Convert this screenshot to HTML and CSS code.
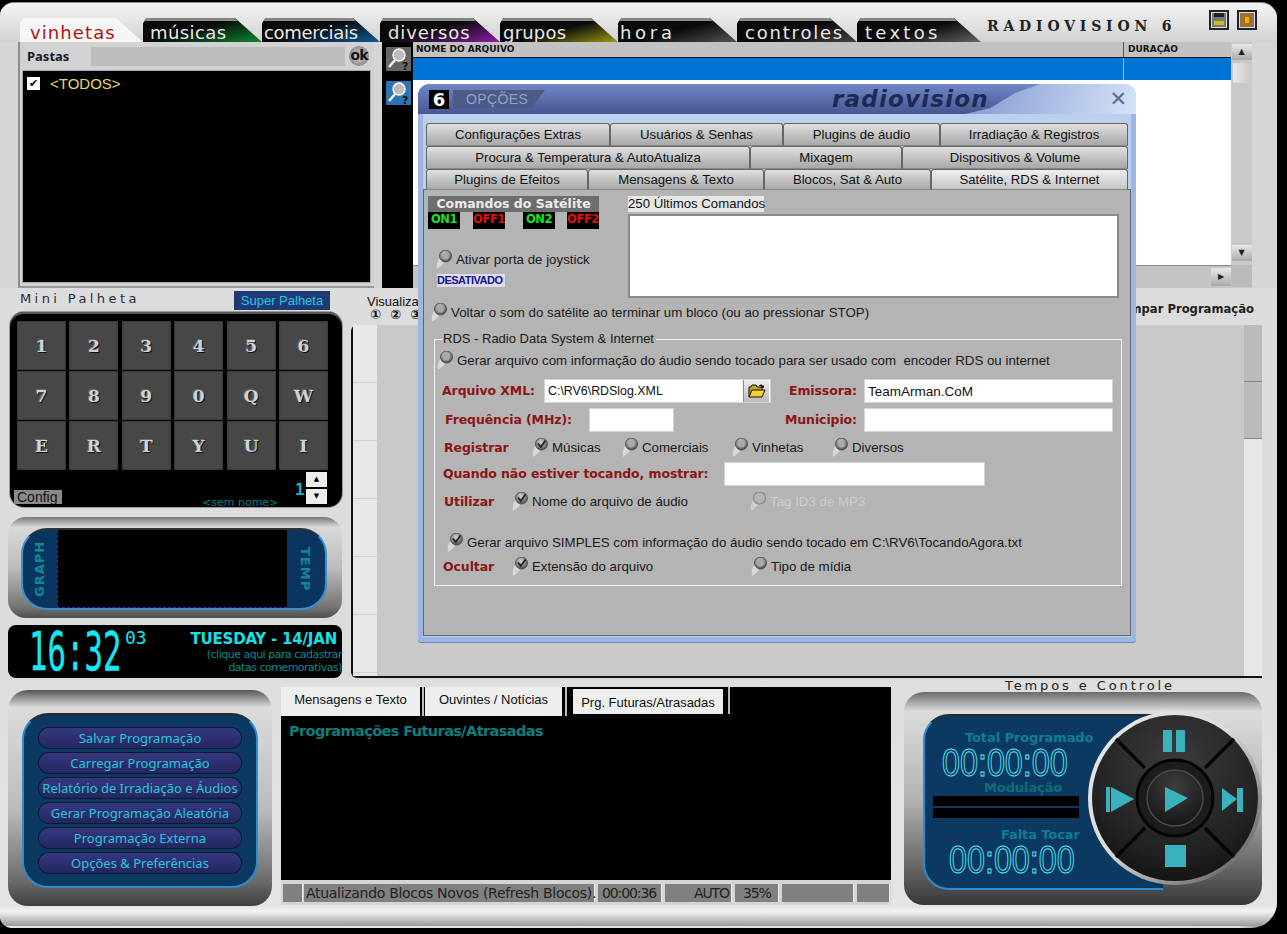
FILE: index.html
```html
<!DOCTYPE html>
<html lang="pt">
<head>
<meta charset="utf-8">
<title>RadioVision 6</title>
<link rel="stylesheet" href="styles.css">
</head>
<body>
<svg class="defs" width="0" height="0" aria-hidden="true">
  <defs>
    <radialGradient id="ball" cx="45%" cy="35%" r="70%">
      <stop offset="0" stop-color="#d4d4d4"/><stop offset=".55" stop-color="#8b8b8b"/><stop offset="1" stop-color="#3d3d3d"/>
    </radialGradient>
    <symbol id="radio" viewBox="0 0 18 20">
      <path d="M1 19 C0 13 2 10 4 7 L8 13 C6 15 4 17 1 19Z" fill="#d8d8d8"/>
      <circle cx="9.5" cy="6" r="6" fill="url(#ball)" stroke="#444" stroke-width=".8"/>
      <circle cx="9.5" cy="6" r="3.4" fill="#a9a9a9"/>
    </symbol>
    <symbol id="radio-on" viewBox="0 0 18 20">
      <path d="M1 19 C0 13 2 10 4 7 L8 13 C6 15 4 17 1 19Z" fill="#d8d8d8"/>
      <circle cx="9.5" cy="6" r="6" fill="url(#ball)" stroke="#444" stroke-width=".8"/>
      <path d="M6 5.5 L8.8 9 L13.5 2.5" fill="none" stroke="#222" stroke-width="1.8"/>
    </symbol>
    <symbol id="radio-off" viewBox="0 0 18 20">
      <path d="M1 19 C0 13 2 10 4 7 L8 13 C6 15 4 17 1 19Z" fill="#cfcfcf"/>
      <circle cx="9.5" cy="6" r="6" fill="#b4b4b4" stroke="#8a8a8a" stroke-width="1.2"/>
    </symbol>
    <symbol id="lens" viewBox="0 0 25 24">
      <circle cx="13" cy="8" r="6" fill="#bdbdbd" stroke="#fff" stroke-width="1.4"/>
      <path d="M9 13 L3 20" stroke="#eee" stroke-width="2.6"/>
      <text x="16" y="23" font-family="DejaVu Sans" font-size="11" font-weight="700" fill="#111">?</text>
    </symbol>
  </defs>
</svg>

<div class="app">
  <header class="topbar">
    <nav class="tabs">
      <span class="tab t-vinhetas">vinhetas</span>
      <span class="tab t-musicas">músicas</span>
      <span class="tab t-comerciais">comerciais</span>
      <span class="tab t-diversos">diversos</span>
      <span class="tab t-grupos">grupos</span>
      <span class="tab t-hora">hora</span>
      <span class="tab t-controles">controles</span>
      <span class="tab t-textos">textos</span>
    </nav>
    <div class="brand">RADIOVISION 6</div>
    <div class="winbtns">
      <span class="winbtn"><i class="min-mark"></i></span>
      <span class="winbtn"><i class="close-mark"></i></span>
    </div>
  </header>

  <section class="browser">
    <div class="folders">
      <div class="folders-head">
        <strong class="folders-title">Pastas</strong>
        <span class="folders-input"></span>
        <span class="ok">ok</span>
      </div>
      <div class="folders-list">
        <div class="folder-item"><span class="check">✔</span><span class="folder-name">&lt;TODOS&gt;</span></div>
      </div>
    </div>
    <div class="searchcol">
      <span class="searchbtn"><svg width="25" height="24"><use href="#lens"/></svg></span>
      <span class="searchbtn searchbtn-blue"><svg width="25" height="24"><use href="#lens"/></svg></span>
    </div>
    <div class="filelist">
      <div class="filelist-main">
        <div class="list-head"><span class="col-name">NOME DO ARQUIVO</span><span class="col-dur">DURAÇÃO</span></div>
        <div class="list-row"><span class="cell-name"></span><span class="cell-dur"></span></div>
        <div class="list-body"></div>
        <div class="hscroll"><span class="sbtn sbtn-right">▶</span></div>
      </div>
      <div class="vscroll">
        <span class="sbtn sbtn-up">▲</span>
        <span class="sthumb"></span>
        <span class="sbtn sbtn-down">▼</span>
        <span class="scorner"></span>
      </div>
    </div>
  </section>

  <section class="middle">
    <aside class="leftcol">
      <div class="palette-head">
        <span class="mini-title">Mini Palheta</span>
        <span class="super-btn">Super Palheta</span>
      </div>
      <div class="keypad">
        <div class="keys">
          <span class="key">1</span><span class="key">2</span><span class="key">3</span><span class="key">4</span><span class="key">5</span><span class="key">6</span>
          <span class="key">7</span><span class="key">8</span><span class="key">9</span><span class="key">0</span><span class="key">Q</span><span class="key">W</span>
          <span class="key">E</span><span class="key">R</span><span class="key">T</span><span class="key">Y</span><span class="key">U</span><span class="key">I</span>
        </div>
        <div class="keypad-foot">
          <span class="config">Config</span>
          <span class="noname">&lt;sem nome&gt;</span>
          <span class="pageno">1</span>
          <span class="spin"><span class="spinbtn">▲</span><span class="spinbtn">▼</span></span>
        </div>
      </div>
      <div class="graph">
        <div class="graph-in">
          <span class="vlabel vlabel-l">GRAPH</span>
          <div class="graph-plot"></div>
          <span class="vlabel vlabel-r">TEMP</span>
        </div>
      </div>
      <div class="clock">
        <div class="clock-time"><span class="clock-hm">16:32</span><span class="clock-s">03</span></div>
        <div class="clock-date">
          <strong class="date-main">TUESDAY - 14/JAN</strong>
          <span class="date-sub">(clique aqui para cadastrar</span>
          <span class="date-sub">datas comemorativas)</span>
        </div>
      </div>
    </aside>
    <div class="schedule">
      <div class="sch-head">
        <div class="view">
          <span class="view-label">Visualizar</span>
          <span class="view-nums"><i>①</i><i>②</i><i>③</i></span>
        </div>
        <strong class="clear">Limpar Programação</strong>
      </div>
      <div class="sch-body">
        <div class="sch-hours"><span></span><span></span><span></span><span></span><span></span><span></span></div>
        <div class="sch-main"></div>
        <div class="sch-scroll"><span></span><span></span></div>
      </div>
    </div>
  </section>

  <section class="bottom">
    <div class="actions">
      <div class="actions-in">
        <span class="action">Salvar Programação</span>
        <span class="action">Carregar Programação</span>
        <span class="action">Relatório de Irradiação e Áudios</span>
        <span class="action">Gerar Programação Aleatória</span>
        <span class="action">Programação Externa</span>
        <span class="action">Opções &amp; Preferências</span>
      </div>
    </div>
    <div class="messages">
      <div class="msg-tabs">
        <span class="msg-tab msg-tab-1">Mensagens e Texto</span>
        <span class="msg-sep"></span>
        <span class="msg-tab msg-tab-2">Ouvintes / Notícias</span>
        <span class="msg-sep msg-sep-2"></span>
        <span class="msg-tab msg-tab-3">Prg. Futuras/Atrasadas</span>
        <span class="msg-sep msg-sep-3"></span>
      </div>
      <div class="msg-body"><strong class="msg-title">Programações Futuras/Atrasadas</strong></div>
      <div class="status">
        <span class="st st-0"></span>
        <span class="st st-1">Atualizando Blocos Novos (Refresh Blocos).</span>
        <span class="st st-2">00:00:36</span>
        <span class="st st-3">AUTO</span>
        <span class="st st-4">35%</span>
        <span class="st st-5"></span>
        <span class="st st-6"></span>
      </div>
    </div>
    <div class="player">
      <div class="player-label">Tempos e Controle</div>
      <div class="player-frame">
        <div class="player-in">
          <strong class="pl-title pl-total">Total Programado</strong>
          <div class="lcd lcd-total">00:00:00</div>
          <strong class="pl-title pl-mod">Modulação</strong>
          <div class="vu"><span></span><span></span></div>
          <strong class="pl-title pl-falta">Falta Tocar</strong>
          <div class="lcd lcd-falta">00:00:00</div>
        </div>
        <svg class="disc" width="180" height="180" viewBox="-90 -90 180 180">
          <defs>
            <linearGradient id="ring" x1="0" y1="0" x2="1" y2="1"><stop offset="0" stop-color="#e8e8e8"/><stop offset=".45" stop-color="#dcdcdc"/><stop offset="1" stop-color="#4a4a4a"/></linearGradient>
            <radialGradient id="face" cx="50%" cy="30%" r="75%"><stop offset="0" stop-color="#3c3c3c"/><stop offset=".7" stop-color="#222"/><stop offset="1" stop-color="#111"/></radialGradient>
            <radialGradient id="hub" cx="50%" cy="30%" r="70%"><stop offset="0" stop-color="#3f3f3f"/><stop offset="1" stop-color="#161616"/></radialGradient>
          </defs>
          <circle r="87" fill="url(#ring)"/>
          <circle r="83" fill="url(#face)"/>
          <g stroke="#050505" stroke-width="3.5">
            <path d="M-30 -30 L-59 -59 M30 -30 L59 -59 M-30 30 L-59 59 M30 30 L59 59"/>
          </g>
          <circle r="38" fill="#1c1c1c" stroke="#050505" stroke-width="3"/>
          <circle r="28" fill="url(#hub)" stroke="#4a4a4a" stroke-width="1.5"/>
          <g fill="#3ab2bd">
            <rect x="-12" y="-68" width="9" height="22"/><rect x="1" y="-68" width="9" height="22"/>
            <path d="M-10 -11 L13 0 L-10 14Z"/>
            <rect x="-10" y="47" width="21" height="22"/>
            <rect x="-69" y="-11" width="4" height="25"/><path d="M-64 -11 L-41 1 L-64 14Z"/>
            <path d="M47 -10 L62 1 L47 13Z"/><rect x="62" y="-10" width="6" height="24"/>
          </g>
        </svg>
      </div>
    </div>
  </section>

  <div class="dialog">
    <div class="dlg-head">
      <div class="dlg-bar">
        <span class="six">6</span>
        <span class="dlg-title">OPÇÕES</span>
        <em class="dlg-logo">radiovision</em>
      </div>
      <span class="dlg-x">✕</span>
    </div>
    <div class="dlg-tabs">
      <div class="tabrow tabrow-1">
        <span class="dtab">Configurações Extras</span><span class="dtab">Usuários &amp; Senhas</span><span class="dtab">Plugins de áudio</span><span class="dtab">Irradiação &amp; Registros</span>
      </div>
      <div class="tabrow tabrow-2">
        <span class="dtab">Procura &amp; Temperatura &amp; AutoAtualiza</span><span class="dtab">Mixagem</span><span class="dtab">Dispositivos &amp; Volume</span>
      </div>
      <div class="tabrow tabrow-3">
        <span class="dtab">Plugins de Efeitos</span><span class="dtab">Mensagens &amp; Texto</span><span class="dtab">Blocos, Sat &amp; Auto</span><span class="dtab dtab-on">Satélite, RDS &amp; Internet</span>
      </div>
    </div>
    <div class="panel">
      <div class="sat-top">
        <div class="sat-left">
          <div class="sat-title">Comandos do Satélite</div>
          <div class="leds"><span class="led led-on">ON1</span><span class="led led-off">OFF1</span><span class="led led-on">ON2</span><span class="led led-off">OFF2</span></div>
          <label class="opt opt-joy"><svg class="rd"><use href="#radio"/></svg>Ativar porta de joystick</label>
          <div class="disabled-tag">DESATIVADO</div>
        </div>
        <div class="sat-right">
          <div class="last-label">250 Últimos Comandos</div>
          <div class="last-box"></div>
        </div>
      </div>
      <label class="opt opt-back"><svg class="rd"><use href="#radio"/></svg>Voltar o som do satélite ao terminar um bloco (ou ao pressionar STOP)</label>
      <fieldset class="rds">
        <legend class="rds-legend">RDS - Radio Data System &amp; Internet</legend>
        <label class="opt opt-gen"><svg class="rd"><use href="#radio"/></svg>Gerar arquivo com informação do áudio sendo tocado para ser usado com&nbsp; encoder RDS ou internet</label>
        <div class="frow frow-xml">
          <span class="rl rl-xml">Arquivo XML:</span>
          <div class="field field-xml"><span class="xml-path">C:\RV6\RDSlog.XML</span>
            <span class="browse"><svg width="18" height="16" viewBox="0 0 18 16"><path d="M1 14V4h2l1-2h4l1 2h5v3" fill="#c9a514" stroke="#111"/><path d="M1 14l3-7h13l-3 7Z" fill="#f2d32e" stroke="#111"/><path d="M11 3c1-2 3-2 4 0l1-1v3h-3l1-1c-1-1-2-1-3-1Z" fill="#111"/></svg></span>
          </div>
          <span class="rl rl-r">Emissora:</span>
          <div class="field">TeamArman.CoM</div>
        </div>
        <div class="frow frow-freq">
          <span class="rl rl-freq">Frequência (MHz):</span>
          <div class="field field-freq"></div>
          <span class="rl rl-r">Municipio:</span>
          <div class="field"></div>
        </div>
        <div class="frow frow-reg">
          <span class="rl rl-reg">Registrar</span>
          <label class="opt"><svg class="rd"><use href="#radio-on"/></svg>Músicas</label>
          <label class="opt"><svg class="rd"><use href="#radio"/></svg>Comerciais</label>
          <label class="opt"><svg class="rd"><use href="#radio"/></svg>Vinhetas</label>
          <label class="opt"><svg class="rd"><use href="#radio"/></svg>Diversos</label>
        </div>
        <div class="frow frow-when">
          <span class="rl rl-when">Quando não estiver tocando, mostrar:</span>
          <div class="field"></div>
        </div>
        <div class="frow frow-use">
          <span class="rl rl-use">Utilizar</span>
          <label class="opt"><svg class="rd"><use href="#radio-on"/></svg>Nome do arquivo de áudio</label>
          <label class="opt opt-dis"><svg class="rd"><use href="#radio-off"/></svg>Tag ID3 de MP3</label>
        </div>
        <label class="opt opt-simple"><svg class="rd"><use href="#radio-on"/></svg>Gerar arquivo SIMPLES com informação do áudio sendo tocado em C:\RV6\TocandoAgora.txt</label>
        <div class="frow frow-hide">
          <span class="rl rl-hide">Ocultar</span>
          <label class="opt"><svg class="rd"><use href="#radio-on"/></svg>Extensão do arquivo</label>
          <label class="opt"><svg class="rd"><use href="#radio"/></svg>Tipo de mídia</label>
        </div>
      </fieldset>
    </div>
  </div>
</div>
</body>
</html>
```

FILE: styles.css
```css
* { box-sizing: border-box; }
html, body { margin: 0; padding: 0; background: #000; }
body { width: 1287px; height: 934px; overflow: hidden; font-family: "Liberation Sans", Arial, sans-serif; font-size: 13px; color: #111; }
.defs { position: absolute; }

.app {
  position: relative; width: 1277px; height: 926px; margin-top: 2px;
  border-top: 1px solid #8d8d8d; border-radius: 14px 16px 26px 12px; overflow: hidden;
  background: linear-gradient(90deg, #e6e6e6 0, #dedede 97%, #9c9c9c 98.5%, #5a5a5a 99%, #c0c0c0 100%);
  display: flex; flex-direction: column;
}

/* top bar */
.topbar { display: flex; height: 39px; align-items: flex-end; padding-left: 20px; background: linear-gradient(#f4f4f4, #d2d2d2); }
.tabs { display: flex; }
.tab {
  display: block; height: 24px; font: 18px/29px "DejaVu Sans", sans-serif; letter-spacing: 1.5px; color: #e8e8e8; white-space: nowrap; overflow: hidden;
  clip-path: polygon(0 22%, 3% 0, calc(100% - 27px) 0, 100% 100%, 0 100%);
}
.t-vinhetas { width: 123px; padding-left: 10px; color: #b01414; background: #f6f6f6; letter-spacing: 1.1px; }
.t-musicas { width: 119px; padding-left: 7px; letter-spacing: .4px; background: linear-gradient(#888 0 3px, transparent 3px), linear-gradient(165deg, #0a0a0a 45%, #0c8a2e); }
.t-comerciais { width: 118px; padding-left: 2px; letter-spacing: -.3px; background: linear-gradient(#888 0 3px, transparent 3px), linear-gradient(165deg, #0a0a0a 45%, #0b5c9c); }
.t-diversos { width: 120px; padding-left: 8px; letter-spacing: .9px; background: linear-gradient(#888 0 3px, transparent 3px), linear-gradient(165deg, #0a0a0a 45%, #8d1ca6); }
.t-grupos { width: 118px; padding-left: 3px; letter-spacing: .2px; background: linear-gradient(#888 0 3px, transparent 3px), linear-gradient(165deg, #0a0a0a 50%, #9c9c16); }
.t-hora { width: 119px; padding-left: 2px; letter-spacing: 3.7px; background: linear-gradient(#888 0 3px, transparent 3px), linear-gradient(165deg, #0a0a0a 50%, #555); }
.t-controles { width: 120px; padding-left: 8px; letter-spacing: 1.8px; background: linear-gradient(#888 0 3px, transparent 3px), linear-gradient(165deg, #0a0a0a 50%, #444); }
.t-textos { width: 124px; padding-left: 8px; letter-spacing: 3.3px; background: linear-gradient(#888 0 3px, transparent 3px), linear-gradient(165deg, #0a0a0a 50%, #666); }
.brand { align-self: flex-start; margin: 14px 0 0 6px; font: 700 14px/18px "DejaVu Serif", serif; letter-spacing: 4.8px; color: #222; white-space: nowrap; width: 222px; }
.winbtns { display: flex; gap: 8px; align-self: flex-start; margin-top: 7px; }
.winbtn { display: flex; align-items: center; justify-content: center; width: 20px; height: 20px; background: #777; border: 2px solid #222; box-shadow: inset 0 0 0 1px #ddd; }
.min-mark { width: 10px; height: 4px; background: #d9b917; margin-top: 5px; box-shadow: 0 -8px 0 0 #222; }
.close-mark { width: 10px; height: 12px; background: #d9b917; border: 3px solid #b36a0a; }

/* browser */
.browser { display: flex; height: 246px; padding-left: 18px; background: #d6d6d6; }
.folders { width: 356px; padding: 4px 3px 4px 2px; background: #d2d2d2; border-left: 2px solid #8d8d8d; border-bottom: 2px solid #9a9a9a; }
.folders-head { display: flex; height: 20px; align-items: center; margin-bottom: 4px; }
.folders-title { width: 69px; padding-left: 5px; font: 700 13px "Noto Sans", sans-serif; color: #1a1a2a; }
.folders-input { width: 254px; height: 19px; background: #bcbcbc; }
.ok { width: 20px; height: 20px; margin-left: 4px; border-radius: 50%; background: radial-gradient(#d8d8d8, #6a6a6a); font: 700 14px/18px "DejaVu Sans", sans-serif; color: #111; text-align: center; letter-spacing: -1px; }
.folders-list { height: 213px; background: #000; border: 1px solid #aaa; padding: 4px 4px; }
.folder-item { display: flex; align-items: center; height: 16px; }
.check { width: 13px; height: 13px; background: #fff; color: #000; font: 700 11px/13px "DejaVu Sans", sans-serif; text-align: center; }
.folder-name { margin-left: 10px; font: 15px "Liberation Sans", sans-serif; color: #e9d96a; }
.searchcol { width: 31px; margin-left: 8px; background: #000; padding: 5px 2px 0 4px; display: flex; flex-direction: column; gap: 10px; }
.searchbtn { display: block; width: 25px; height: 24px; background: #666; }
.searchbtn-blue { background: #2f73b5; }
.filelist { flex: none; width: 839px; display: flex; }
.filelist-main { width: 818px; display: flex; flex-direction: column; }
.list-head { display: flex; height: 16px; background: #c2c2c2; border-bottom: 1px solid #111; font: 900 9px/14px "DejaVu Sans", sans-serif; color: #111; }
.col-name { width: 710px; padding-left: 3px; }
.col-dur { flex: 1; padding-left: 4px; border-left: 1px solid #555; }
.list-row { display: flex; height: 22px; background: #0074d4; }
.cell-name { width: 710px; }
.cell-dur { flex: 1; border-left: 1px solid #8cbce8; }
.list-body { height: 185px; background: #fff; }
.hscroll { flex: 1; background: #c4c4c4; border-top: 1px solid #888; display: flex; justify-content: flex-end; align-items: center; }
.sbtn { display: block; width: 20px; height: 16px; background: linear-gradient(#e8e8e8, #aaa); font: 8px/16px "DejaVu Sans", sans-serif; text-align: center; color: #222; }
.sbtn-right { height: 18px; line-height: 18px; }
.vscroll { width: 21px; background: #c9c9c9; display: flex; flex-direction: column; align-items: center; padding-top: 2px; }
.sthumb { width: 18px; height: 20px; margin-top: 3px; background: linear-gradient(90deg, #e8e8e8, #c8c8c8); }
.sbtn-down { margin-top: 162px; }
.scorner { width: 21px; height: 22px; margin-top: 4px; background: #bbb; }

/* middle */
.middle { display: flex; height: 392px; background: #dcdcdc; padding-left: 8px; }
.leftcol { width: 334px; }
.palette-head { display: flex; height: 24px; padding: 3px 0 0 12px; }
.mini-title { width: 214px; font: 13px/16px "DejaVu Sans", sans-serif; letter-spacing: 3.4px; color: #2a2a3a; white-space: nowrap; }
.super-btn { width: 96px; height: 19px; background: #1f3a73; color: #1fc7e8; font: 13px/19px "Liberation Sans", sans-serif; text-align: center; }
.keypad { width: 332px; height: 195px; margin-left: 2px; padding: 9px 13px 0 7px; background: #000; border-radius: 14px; box-shadow: inset 0 2px 0 #5a5a5a, 0 0 0 1px #999; position: relative; }
.keys { display: grid; grid-template-columns: repeat(6, 49px); grid-auto-rows: 49px; column-gap: 3.4px; row-gap: 1px; }
.key { display: flex; align-items: center; justify-content: center; background: #474747; font: 700 17px "DejaVu Serif", serif; color: #cfd3d8; text-shadow: 1px 1px 0 #111, -1px -1px 0 #6a6a6a; box-shadow: inset 0 0 2px #222; }
.keypad-foot { display: flex; height: 34px; align-items: flex-end; margin-left: -3px; }
.config { width: 48px; height: 14px; background: #8a8a8a; font: 14px/15px "Liberation Sans", sans-serif; color: #111; overflow: hidden; padding-left: 3px; }
.noname { position: absolute; left: 192px; top: 186px; height: 9px; font: 11px/9px "DejaVu Sans", sans-serif; color: #0c7f86; overflow: hidden; white-space: nowrap; }
.pageno { margin-left: 233px; margin-bottom: 6px; font: 700 16px/16px "DejaVu Sans Mono", monospace; color: #12b5c4; width: 11px; }
.spin { display: flex; flex-direction: column; gap: 2px; width: 21px; }
.spinbtn { display: block; height: 15px; background: #eee; color: #000; font: 7px/15px "DejaVu Sans", sans-serif; text-align: center; }
.graph { height: 101px; margin-top: 10px; padding: 11px 15px 8px 13px; border-radius: 18px; background: linear-gradient(#777 0, #d8d8d8 10%, #bdbdbd 50%, #777 88%, #4f4f4f 100%); }
.graph-in { display: flex; height: 82px; border-radius: 26px; border: 2px solid #3a8fcf; border-top-color: #333; overflow: hidden; background: #0a3560; }
.vlabel { writing-mode: vertical-rl; font: 700 13px/14px "DejaVu Sans", sans-serif; letter-spacing: 1px; color: #0f8a94; text-align: center; }
.vlabel-l { width: 34px; transform: rotate(180deg); padding-right: 10px; }
.vlabel-r { width: 38px; padding-right: 13px; }
.graph-plot { width: 231px; background: #000; border-left: 1px dashed #1b2fd0; border-bottom: 1px dashed #1b2fd0; }
.clock { display: flex; height: 53px; margin-top: 7px; background: #000; border-radius: 8px; }
.clock-time { position: relative; width: 120px; padding-left: 21px; }
.clock-hm { display: block; font: 53px/53px "DejaVu Sans Mono", monospace; color: #18e6f2; -webkit-text-stroke: .4px #18e6f2; transform: scaleX(.58); transform-origin: left; white-space: nowrap; }
.clock-s { position: absolute; left: 117px; top: 4px; font: 18px/18px "DejaVu Sans Mono", monospace; color: #18e6f2; }
.clock-date { flex: 1; display: flex; flex-direction: column; align-items: flex-end; padding-top: 6px; }
.date-main { font: 700 15px/17px "DejaVu Sans", sans-serif; color: #16e0ec; white-space: nowrap; padding-right: 5px; letter-spacing: -.2px; }
.date-sub { font: 11px/13px "DejaVu Sans", sans-serif; color: #0b8b8f; white-space: nowrap; letter-spacing: -.5px; }

.schedule { width: 911px; margin-left: 9px; display: flex; flex-direction: column; }
.sch-head { display: flex; justify-content: space-between; height: 37px; padding: 7px 8px 0 16px; }
.view { display: flex; flex-direction: column; }
.view-label { font: 13px/14px "Liberation Sans", sans-serif; }
.view-nums { display: flex; gap: 8px; padding-left: 3px; font: 700 13px/12px "DejaVu Sans", sans-serif; }
.view-nums i { font-style: normal; width: 12px; }
.clear { font: 700 11.6px/16px "DejaVu Sans", sans-serif; color: #222; margin-top: 6px; }
.sch-body { display: flex; height: 353px; border-left: 2px solid #111; border-bottom: 2px solid #111; border-radius: 6px 0 0 6px; background: #c9c9c9; }
.sch-hours { width: 24px; background: #e8e8e8; }
.sch-hours span { display: block; height: 58px; border-bottom: 1px solid #d0d0d0; }
.sch-main { width: 867px; background: #c9c9c9; }
.sch-scroll { width: 18px; background: #e6e6e6; }
.sch-scroll span { display: block; height: 57px; background: #bbb; border-bottom: 1px solid #888; }

/* bottom */
.bottom { position: relative; display: flex; height: 246px; padding: 0 0 0 8px; background: linear-gradient(#dedede, #e4e4e4 92%, #f4f4f4 94%, #9a9a9a 100%); }
.actions { width: 264px; height: 216px; margin-top: 10px; padding: 23px 14px 18px 14px; border-radius: 20px; background: linear-gradient(#565656 0, #dcdcdc 8%, #bcbcbc 55%, #6d6d6d 88%, #3f3f3f 100%); }
.actions-in { height: 175px; padding: 13px 15px; border-radius: 26px; border: 2px solid #2a8ed2; border-top-color: #2b2b2b; background: #0c3962; display: flex; flex-direction: column; gap: 5px; }
.action { display: block; height: 20px; border-radius: 10px; background: linear-gradient(#35387f, #23265f); box-shadow: 0 0 0 1px #101533; font: 13px/20px "Noto Sans", sans-serif; color: #25c8de; text-align: center; white-space: nowrap; }
.messages { width: 610px; height: 218px; margin: 7px 0 0 9px; background: #000; display: flex; flex-direction: column; }
.msg-tabs { display: flex; height: 29px; }
.msg-tab { display: block; background: #eee; text-align: center; white-space: nowrap; }
.msg-tab-1 { width: 139px; height: 29px; line-height: 26px; }
.msg-tab-2 { width: 137px; height: 29px; line-height: 26px; }
.msg-tab-3 { width: 150px; height: 25px; line-height: 27px; margin-top: 2px; }
.msg-sep { display: block; width: 2px; height: 29px; margin: 0 1px 0 2px; background: #bbb; }
.msg-sep-2 { margin: 0 6px 0 3px; }
.msg-sep-3 { height: 27px; margin-left: 5px; }
.msg-body { height: 164px; padding: 6px 8px; }
.msg-title { font: 700 14.5px/18px "DejaVu Sans", sans-serif; color: #0d7d7d; letter-spacing: -.6px; }
.status { flex: 1; display: flex; gap: 3px; padding: 4px 0 1px 2px; background: #d4d4d4; font: 14px/18px "DejaVu Sans", sans-serif; letter-spacing: -1.1px; color: #222; }
.st { display: block; height: 18px; background: #808080; white-space: nowrap; border-right: 1px solid #eee; }
.st-0 { width: 20px; margin-right: -2px; }
.st-1 { width: 291px; padding-left: 2px; letter-spacing: -.3px; }
.st-2 { width: 64px; padding-left: 4px; }
.st-3 { width: 67px; text-align: right; padding-right: 2px; }
.st-4 { width: 44px; padding-left: 8px; }
.st-5 { width: 72px; }
.st-6 { width: 33px; }
.player { width: 358px; margin-left: 13px; position: relative; }
.player-label { height: 12px; padding-left: 101px; font: 13px/12px "DejaVu Sans", sans-serif; letter-spacing: 2.9px; color: #222; white-space: nowrap; }
.player-frame { position: relative; height: 213px; padding: 22px 0 0 19px; border-radius: 20px; background: linear-gradient(#6a6a6a 0, #dcdcdc 9%, #b4b4b4 50%, #585858 88%, #383838 100%); }
.player-in { width: 240px; height: 176px; padding-top: 14px; border-radius: 26px 0 0 26px; border-left: 2px solid #2a8ed2; border-bottom: 2px solid #2a8ed2; border-top: 2px solid #2a2a2a; background: #0c3962; }
.pl-title { display: block; font: 700 13px/16px "DejaVu Sans", sans-serif; color: #0f7e92; white-space: nowrap; letter-spacing: -.1px; }
.pl-total { margin-left: 40px; }
.lcd { font: 38px/28px "Liberation Sans", sans-serif; color: transparent; -webkit-text-stroke: 1px #55e9f6; transform: scaleX(.85); transform-origin: left; white-space: nowrap; }
.lcd-total { margin: 3px 0 0 17px; }
.pl-mod { margin: 3px 0 0 59px; color: #0d6f78; }
.vu { margin-left: 8px; width: 146px; }
.vu span { display: block; height: 10px; margin-bottom: 2px; background: #000; }
.pl-falta { margin: 9px 0 0 76px; }
.lcd-falta { margin: 3px 0 0 24px; }
.disc { position: absolute; left: 181px; top: 16px; }

/* dialog */
.dialog {
  position: absolute; left: 418px; top: 81px; width: 718px; height: 558px;
  border-radius: 12px 12px 3px 3px; background: #bcd0ee; border-style: solid; border-width: 0 5px 5px 5px; border-color: #9db7e2;
  box-shadow: 0 1px 0 #6d88bd;
}
.dlg-head { position: relative; height: 30px; margin: 0 -5px; border-radius: 12px 12px 0 0; overflow: hidden; background: linear-gradient(110deg, #7087c9 70%, #d5e4f7); }
.dlg-bar {
  display: flex; align-items: center; height: 30px; padding-left: 11px; background: linear-gradient(#7187c7, #46568f);
  width: 622px; clip-path: polygon(0 0, 100% 0, 96% 30%, 92% 80%, 88% 100%, 0 100%);
}
.six { width: 20px; height: 19px; background: #000; color: #fff; font: 700 18px/19px "DejaVu Sans", sans-serif; text-align: center; }
.dlg-title { width: 92px; height: 18px; margin-left: 4px; padding-left: 13px; background: #4b5a87; color: #8ea1c9; font: 14px/18px "Liberation Sans", sans-serif; letter-spacing: .4px; clip-path: polygon(0 0, 100% 0, 85% 100%, 0 100%); }
.dlg-logo { margin-left: 287px; font: italic 700 23px/24px "DejaVu Sans", sans-serif; color: #1d2a55; letter-spacing: 1.2px; white-space: nowrap; }
.dlg-x { position: absolute; right: 9px; top: 5px; font: 21px/20px "DejaVu Sans", sans-serif; color: #5a6f92; }
.dlg-tabs { padding: 9px 2px 0 3px; }
.tabrow { display: grid; height: 23px; }
.tabrow-1 { grid-template-columns: 184px 173px 157px 188px; }
.tabrow-2 { grid-template-columns: 324px 152px 226px; }
.tabrow-3 { grid-template-columns: 162px 176px 167px 197px; height: 20px; }
.dtab { display: block; background: linear-gradient(#e0e0e0, #a8a8a8); border: 1px solid #666; border-bottom-color: #888; border-radius: 3px 3px 0 0; text-align: center; font: 13.2px/21px "Liberation Sans", sans-serif; color: #111; white-space: nowrap; }
.tabrow-3 .dtab { line-height: 19px; }
.dtab-on { background: linear-gradient(#f0f0f0, #c4c4c4); }
.panel { height: 447px; padding: 6px 0 0 4px; background: #b4b4b4; border: 1px solid #666; }

.opt { display: flex; align-items: center; height: 20px; font: 13.3px/20px "Liberation Sans", sans-serif; color: #1a1a1a; white-space: nowrap; }
.rd { width: 18px; height: 20px; margin-right: 2px; flex: none; }
.sat-top { display: flex; height: 101px; }
.sat-left { width: 200px; }
.sat-title { width: 171px; height: 16px; background: #6e6e6e; color: #ececec; font: 700 12.5px/16px "DejaVu Sans", sans-serif; text-align: center; white-space: nowrap; }
.leds { display: flex; }
.led { width: 32px; height: 17px; background: #000; font: 700 11.5px/14px "DejaVu Sans", sans-serif; text-align: center; letter-spacing: -.4px; overflow: hidden; white-space: nowrap; }
.led-on { color: #12e61c; }
.led-off { color: #e30f0f; }
.led:nth-child(2) { margin-left: 13px; }
.led:nth-child(3) { margin-left: 18px; }
.led:nth-child(4) { margin-left: 12px; }
.opt-joy { margin: 21px 0 0 8px; }
.disabled-tag { width: 68px; height: 13px; margin: 4px 0 0 9px; background: #dcdcec; color: #14148c; font: 700 11px/13px "Liberation Sans", sans-serif; white-space: nowrap; letter-spacing: -.5px; }
.sat-right { width: 491px; }
.last-label { width: 136px; height: 16px; background: #e6e6e6; font: 13.2px/16px "Liberation Sans", sans-serif; white-space: nowrap; }
.last-box { height: 84px; margin-top: 2px; background: #fff; border: 2px solid #8a8a8a; }
.opt-back { margin: 6px 0 0 3px; }
.rds { display: block; width: 688px; height: 254px; margin: 9px 0 0 6px; padding: 0; min-width: 0; border: 1px solid #f2f2f2; }
.rds-legend { margin-left: 8px; padding: 0 2px 0 0; font: 13px/14px "Liberation Sans", sans-serif; color: #1a1a1a; white-space: nowrap; }
.opt-gen { margin: 5px 0 0 2px; }
.frow { display: grid; align-items: center; }
.rl { font: 700 12.5px/16px "DejaVu Sans", sans-serif; color: #8c1616; white-space: nowrap; letter-spacing: -.1px; }
.rl-r { text-align: right; padding-right: 7px; }
.field { display: flex; align-items: center; height: 24px; padding-left: 3px; background: #fff; border: 1px solid #d4d4d4; font: 13.5px "Liberation Sans", sans-serif; color: #111; white-space: nowrap; }
.xml-path { font-size: 12.4px; }
.frow-xml { grid-template-columns: 109px 227px 93px 249px; margin-top: 8px; }
.rl-xml { padding-left: 7px; }
.field-xml { justify-content: space-between; padding-right: 1px; }
.browse { display: flex; align-items: center; justify-content: center; width: 26px; height: 22px; background: linear-gradient(#eee, #bbb); border-left: 1px solid #888; }
.frow-freq { grid-template-columns: 154px 182px 93px 249px; margin-top: 5px; }
.rl-freq { padding-left: 10px; }
.field-freq { width: 85px; }
.frow-reg { grid-template-columns: 97px 90px 110px 100px auto; margin-top: 6px; }
.rl-reg { padding-left: 9px; }
.frow-when { grid-template-columns: 289px 261px; margin-top: 4px; }
.rl-when { padding-left: 8px; }
.frow-use { grid-template-columns: 77px 238px auto; margin-top: 6px; }
.rl-use { padding-left: 9px; }
.opt-dis { color: #cdcdcd; }
.opt-simple { margin: 21px 0 0 12px; }
.frow-hide { grid-template-columns: 77px 239px auto; margin-top: 4px; }
.rl-hide { padding-left: 8px; }
```
